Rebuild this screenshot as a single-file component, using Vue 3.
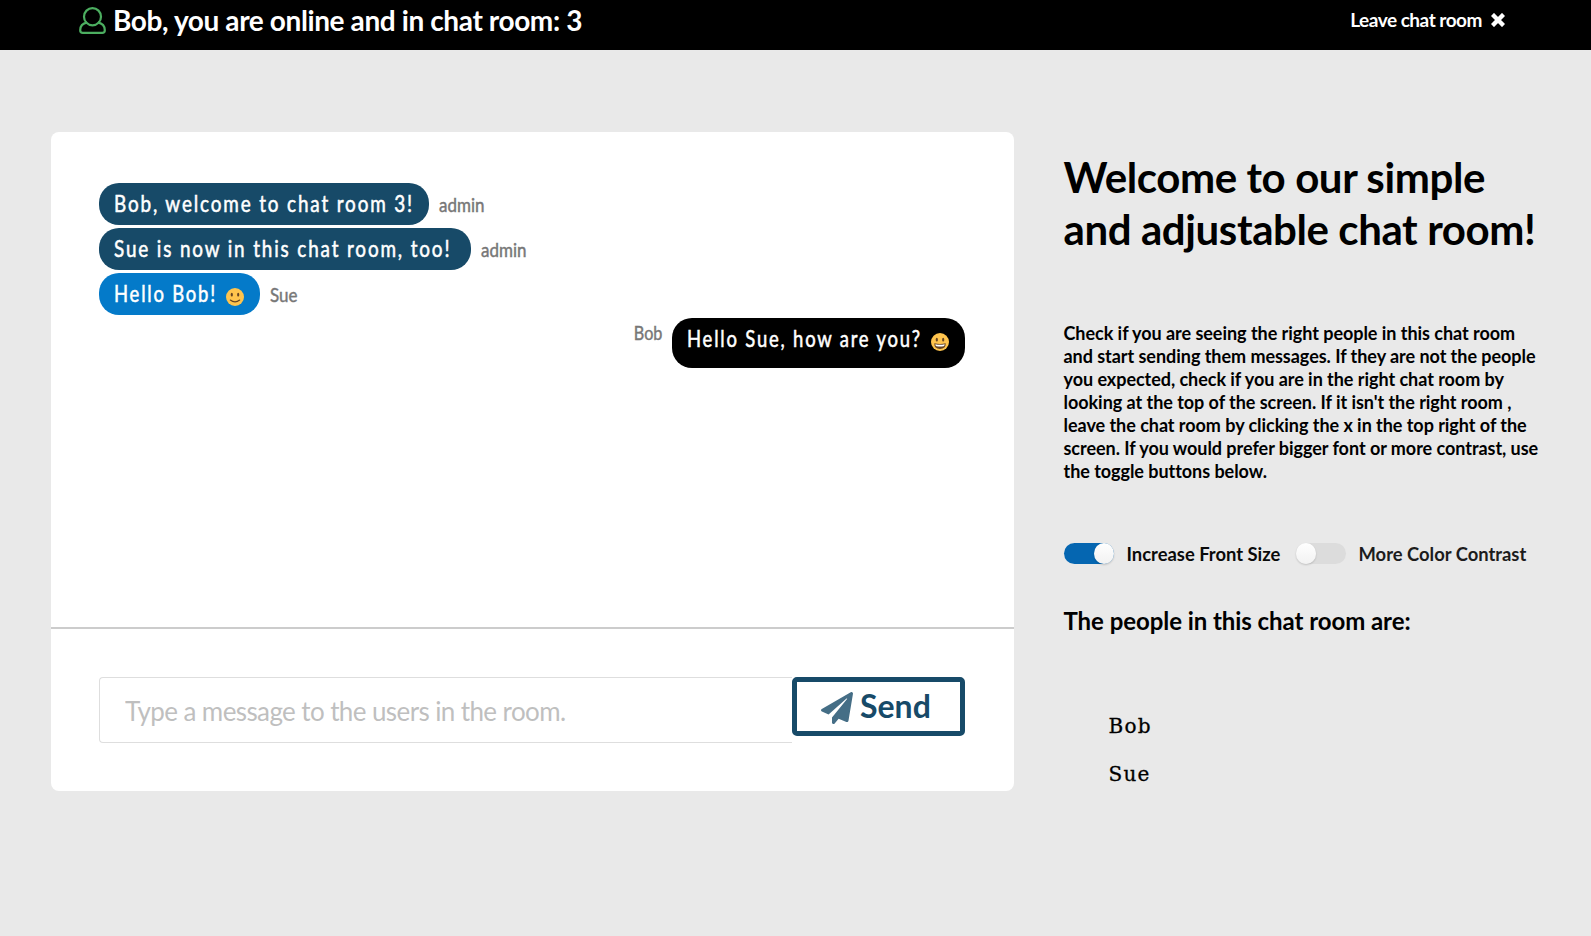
<script setup>
import { ref } from 'vue'

const user = 'Bob'
const room = 3
const draft = ref('')
const bigFont = ref(true)
const contrast = ref(false)
const people = ['Bob', 'Sue']
const messages = [
  { text: 'Bob, welcome to chat room 3!', from: 'admin', kind: 'admin', size: 'w1' },
  { text: 'Sue is now in this chat room, too!', from: 'admin', kind: 'admin', size: 'w2' },
  { text: 'Hello Bob!', from: 'Sue', kind: 'other', size: 'w3', emoji: 'smile' },
  { text: 'Hello Sue, how are you?', from: 'Bob', kind: 'own', size: 'w4', emoji: 'grin' },
]
</script>

<template>
  <div class="page">
    <header class="bar">
      <svg class="user-icon" viewBox="0 0 27 27">
        <path d="M8.2 15.4C4.2 16.2 1.2 19 1.2 23.2c0 1.7 1 2.7 2.6 2.7h19.4c1.6 0 2.6-1 2.6-2.7 0-4.200-3-7-7-7.800" />
        <ellipse cx="13.500" cy="9.700" rx="8.500" ry="8.600" />
      </svg>
      <h1 class="status">{{ user }}, you are online and in chat room: {{ room }}</h1>
      <a class="leave">
        <span>Leave chat room</span>
        <svg class="close" viewBox="0 0 14 14"><path d="M3 3l8 8M11 3l-8 8" /></svg>
      </a>
    </header>

    <main class="layout">
      <section class="card">
        <div class="messages">
          <div v-for="m in messages" :key="m.text" class="row" :class="m.kind">
            <div class="bubble" :class="m.size">
              <span class="txt">{{ m.text }}</span>
              <svg v-if="m.emoji" class="emoji" viewBox="0 0 18 18">
                <circle cx="9" cy="9" r="9" fill="#ffc44d" />
                <ellipse cx="5.800" cy="6.700" rx="1.100" ry="1.900" fill="#664422" />
                <ellipse cx="12.200" cy="6.700" rx="1.100" ry="1.900" fill="#664422" />
                <path v-if="m.emoji === 'smile'" d="M4.300 12q4.700 3.800 9.400 0" fill="none" stroke="#664422" stroke-width="1.100" stroke-linecap="round" />
                <template v-else>
                  <path d="M3.300 10.300q5.700 1.500 11.400 0q.2 5.700-5.700 5.700t-5.700-5.700z" fill="#664422" />
                  <path d="M4.300 11.200q4.700 1 9.400 0q-.2 2-1.200 2-3.500.7-7 0-1 0-1.200-2z" fill="#fff" />
                </template>
              </svg>
            </div>
            <span class="from"><span class="from-txt">{{ m.from }}</span></span>
          </div>
        </div>
        <form class="composer" @submit.prevent>
          <input v-model="draft" class="field" placeholder="Type a message to the users in the room." />
          <button class="send">
            <svg class="plane" viewBox="0 0 512 512"><path d="M476 3.200 12.500 270.600c-18.100 10.400-15.800 35.600 2.200 43.200L121 358.400l287.300-253.200c5.500-4.900 13.300 2.600 8.600 8.300L176 407v80.500c0 23.600 28.500 32.900 42.500 15.800L282 426l124.600 52.200c14.200 6 30.400-2.900 33-18.200l72-432C515 7.800 493.300-6.800 476 3.200z" /></svg>
            <span>Send</span>
          </button>
        </form>
      </section>

      <aside class="side">
        <h2 class="welcome">Welcome to our simple<br />and adjustable chat room!</h2>
        <p class="help">
          Check if you are seeing the right people in this chat room<br />
          and start sending them messages. If they are not the people<br />
          you expected, check if you are in the right chat room by<br />
          looking at the top of the screen. If it isn't the right room ,<br />
          leave the chat room by clicking the x in the top right of the<br />
          screen. If you would prefer bigger font or more contrast, use<br />
          the toggle buttons below.
        </p>
        <div class="toggles">
          <div class="toggle" :class="{ on: bigFont }" @click="bigFont = !bigFont">
            <span class="track"><span class="knob"></span></span>
            <span class="label first">Increase Front Size</span>
          </div>
          <div class="toggle" :class="{ on: contrast }" @click="contrast = !contrast">
            <span class="track"><span class="knob"></span></span>
            <span class="label">More Color Contrast</span>
          </div>
        </div>
        <h3 class="people-title">The people in this chat room are:</h3>
        <ul class="people">
          <li v-for="p in people" :key="p">{{ p }}</li>
        </ul>
      </aside>
    </main>
  </div>
</template>

<style>
body {
  margin: 0;
  background: #e9e9e9;
}
</style>

<style scoped>
* {
  box-sizing: border-box;
}
.page {
  height: 936px;
  overflow: hidden;
  background: #e9e9e9;
  color: #000;
  font-family: Lato, sans-serif;
}
h1, h2, h3, p, ul {
  margin: 0;
  padding: 0;
}
.bar {
  height: 50px;
  padding: 0 86px 0 79px;
  display: flex;
  align-items: flex-start;
  background: #000;
  color: #fff;
}
.user-icon {
  width: 27px;
  height: 27px;
  margin: 7px 7px 0 0;
  fill: none;
  stroke: #4cae60;
  stroke-width: 2.2;
}
.status {
  font-size: 28px;
  line-height: 40px;
  font-weight: 700;
  letter-spacing: -0.39px;
  white-space: nowrap;
}
.leave {
  margin-left: auto;
  display: flex;
  gap: 9px;
  font-size: 19px;
  line-height: 39px;
  font-weight: 700;
  letter-spacing: -0.48px;
}
.close {
  width: 14px;
  height: 14px;
  margin-top: 13px;
  fill: none;
  stroke: #fff;
  stroke-width: 4.4;
  stroke-linecap: square;
}
.layout {
  padding: 82px 0 0 51px;
  display: flex;
  align-items: flex-start;
  gap: 49.5px;
}
.card {
  width: 963px;
  height: 659px;
  background: #fff;
  border-radius: 8px;
}
.messages {
  height: 497px;
  padding: 51px 49px 0 48px;
  border-bottom: 2px solid #ccc;
  display: flex;
  flex-direction: column;
  gap: 3px;
}
.row {
  display: flex;
  align-items: flex-start;
  gap: 10px;
}
.bubble {
  height: 42px;
  padding: 0 15px;
  display: flex;
  justify-content: space-between;
  border-radius: 20px;
  background: #174a68;
  color: #fff;
  font-size: 22.5px;
  line-height: 41px;
  white-space: nowrap;
}
.other .bubble {
  background: #047ac9;
}
.own {
  flex-direction: row-reverse;
}
.own .bubble {
  height: 50px;
  background: #000;
}
.w1 { width: 330px; }
.w2 { width: 372px; }
.w3 { width: 161px; }
.w4 { width: 293px; }
.txt {
  width: 0;
  letter-spacing: 2.2px;
  -webkit-text-stroke: 0.55px currentColor;
  transform: scaleX(0.84);
  transform-origin: 0 50%;
}
.other .txt,
.own .txt {
  transform: scaleX(0.82);
}
.emoji {
  width: 18px;
  height: 18px;
  margin: 15px 1px 0 0;
}
.from {
  height: 42px;
  color: #777;
  font-size: 19.5px;
  line-height: 43px;
  -webkit-text-stroke: 0.45px currentColor;
}
.from-txt {
  display: inline-block;
  transform: scaleX(0.87);
  transform-origin: 0 50%;
}
.own .from {
  line-height: 29px;
}
.own .from-txt {
  transform: scaleX(0.83);
  transform-origin: 100% 50%;
}
.composer {
  padding: 48px 49px 0 48px;
  display: flex;
  align-items: flex-start;
}
.field {
  flex: 1;
  min-width: 0;
  height: 66px;
  padding: 2px 25px 0;
  border: 1px solid #dedede;
  border-right: 0;
  border-radius: 4px 0 0 4px;
  background: #fff;
  font-family: Lato, sans-serif;
  font-size: 26px;
  letter-spacing: -0.6px;
  outline: none;
}
.field::placeholder {
  color: #bfbfbf;
  opacity: 1;
}
.send {
  width: 173px;
  height: 59px;
  padding: 0 0 0 24px;
  display: flex;
  align-items: center;
  gap: 7px;
  border: 5px solid #174a68;
  border-radius: 5px;
  background: #fff;
  color: #174a68;
  font-family: Lato, sans-serif;
  font-weight: 700;
  font-size: 32px;
  line-height: 49px;
}
.send span {
  margin-top: -3px;
}
.plane {
  width: 32px;
  height: 32px;
  margin-top: 3px;
  fill: #174a68;
  opacity: 0.8;
}
.side {
  padding-top: 19px;
  white-space: nowrap;
}
.welcome {
  font-size: 42px;
  line-height: 52px;
  font-weight: 700;
  letter-spacing: -0.4px;
}
.help {
  margin-top: 67px;
  font-size: 18px;
  line-height: 23px;
  font-weight: 700;
  letter-spacing: -0.04px;
}
.toggles {
  height: 21px;
  margin-top: 60px;
  display: flex;
  gap: 15px;
}
.toggle {
  display: flex;
  gap: 13px;
}
.track {
  width: 50px;
  height: 21px;
  display: flex;
  border-radius: 11px;
  background: #dcdcdc;
}
.knob {
  width: 20px;
  height: 21px;
  border-radius: 50%;
  background: linear-gradient(#fff, #f2f2f2);
  box-shadow: 0 1px 2px rgba(0, 0, 0, 0.18);
}
.on .track {
  justify-content: flex-end;
  background: #0566b1;
}
.label {
  font-size: 18.4px;
  line-height: 23px;
  font-weight: 700;
  color: #1c1c1c;
}
.label.first {
  width: 154px;
  color: #0a0a0a;
}
.people-title {
  margin-top: 42px;
  font-size: 24px;
  line-height: 30px;
  font-weight: 700;
  letter-spacing: -0.06px;
}
.people {
  margin-top: 66px;
  padding-left: 45px;
  list-style: none;
  font-family: "DejaVu Serif", serif;
  font-size: 20px;
  line-height: 48px;
  letter-spacing: 1.2px;
  -webkit-text-stroke: 0.3px currentColor;
}
</style>
